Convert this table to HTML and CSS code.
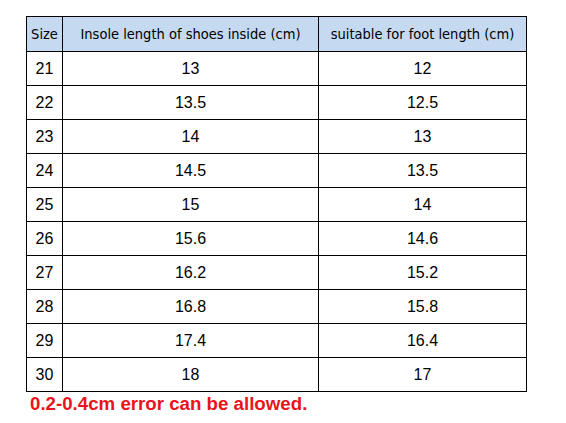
FILE: index.html
```html
<!DOCTYPE html>
<html>
<head>
<meta charset="utf-8">
<link rel="stylesheet" href="styles.css">
</head>
<body>
<div class="wrap">
<table class="sizes">
<colgroup><col class="c1"><col class="c2"><col class="c3"></colgroup>
<thead>
<tr><th>Size</th><th>Insole length of shoes inside (cm)</th><th>suitable for foot length (cm)</th></tr>
</thead>
<tbody>
<tr><td>21</td><td>13</td><td>12</td></tr>
<tr><td>22</td><td>13.5</td><td>12.5</td></tr>
<tr><td>23</td><td>14</td><td>13</td></tr>
<tr><td>24</td><td>14.5</td><td>13.5</td></tr>
<tr><td>25</td><td>15</td><td>14</td></tr>
<tr><td>26</td><td>15.6</td><td>14.6</td></tr>
<tr><td>27</td><td>16.2</td><td>15.2</td></tr>
<tr><td>28</td><td>16.8</td><td>15.8</td></tr>
<tr><td>29</td><td>17.4</td><td>16.4</td></tr>
<tr><td>30</td><td>18</td><td>17</td></tr>
</tbody>
</table>
<p class="note">0.2-0.4cm error can be allowed.</p>
</div>
</body>
</html>
```
FILE: styles.css
```css
html, body { margin: 0; padding: 0; background: #fff; }
.wrap { padding: 16px 0 0 26px; }
.sizes {
  border-collapse: collapse;
  table-layout: fixed;
  width: 500px;
  font-family: "Liberation Sans", Arial, sans-serif;
  font-size: 16px;
  color: #000;
}
.c1 { width: 36px; }
.c2 { width: 256px; }
.c3 { width: 208px; }
.sizes th, .sizes td {
  border: 1px solid #000;
  padding: 0;
  text-align: center;
  vertical-align: middle;
}
.sizes th {
  background: #c5d9f1;
  height: 34px;
  font-family: "DejaVu Sans Condensed", "DejaVu Sans", sans-serif;
  font-weight: normal;
  font-size: 14.5px;
}
.sizes td { height: 33px; }
.note {
  margin: 2px 0 0 4px;
  font-family: "Liberation Sans", Arial, sans-serif;
  font-weight: bold;
  font-size: 18.7px;
  color: #e8141c;
  line-height: 20px;
}
```
